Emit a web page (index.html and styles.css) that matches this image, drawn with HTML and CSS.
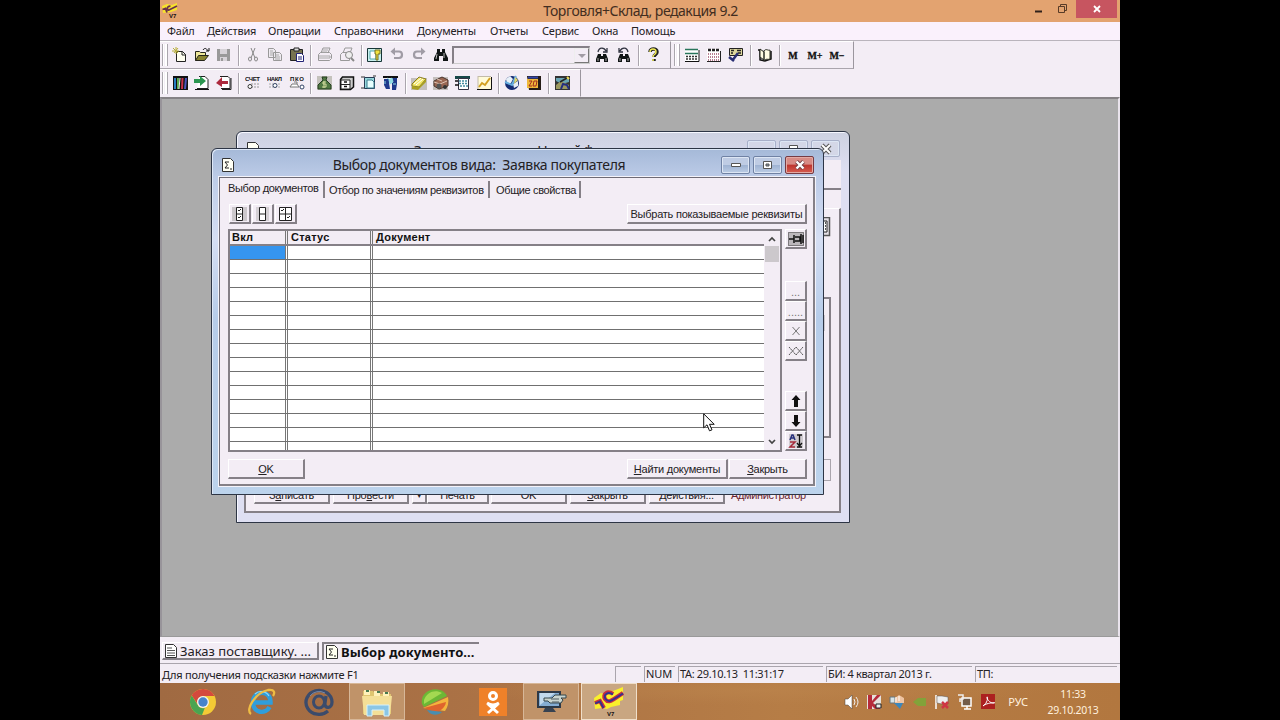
FILE: index.html
```
<!DOCTYPE html>
<html lang="ru">
<head>
<meta charset="utf-8">
<title>Торговля+Склад, редакция 9.2</title>
<link rel="stylesheet" href="styles.css">
</head>
<body>
<div class="desktop">
  <header class="titlebar">
    <svg class="app-logo" width="18" height="18" viewBox="0 0 18 18"><path d="M1 5L6 3 11 4 16 2 16 9 10 11 2 12Z" fill="#f8e32c"/><path d="M1.500 8.500l3-1 1.500 4M9.500 5.500c-3-1.500-4.500 4-1.500 3.500l8-4" fill="none" stroke="#69304c" stroke-width="1.800"/><text x="8" y="17" class="v7">V7</text></svg>
    <h1 class="app-title">Торговля+Склад, редакция 9.2</h1>
    <svg class="win-ctl" width="84" height="22" viewBox="0 0 84 22"><path d="M2 11.500h7" stroke="#30211a" stroke-width="2"/><path d="M25.500 6.500h6v6h-6zM27.500 6V4.500h6v6H32" fill="none" stroke="#583b27"/><rect x="43" width="42" height="18" fill="#c75560"/><path d="M61 6l6 6M67 6l-6 6" stroke="#fff" stroke-width="1.800"/></svg>
  </header>
  <nav class="menu"><span class="m1">Файл</span><span class="m2">Действия</span><span class="m3">Операции</span><span class="m4">Справочники</span><span class="m5">Документы</span><span class="m6">Отчеты</span><span class="m7">Сервис</span><span class="m8">Окна</span><span class="m9">Помощь</span></nav>
  <div class="toolbars">
    <div class="toolbar-row">
      <div class="toolbar tb-main">
        <i class="grip"></i>
        <svg class="ic" viewBox="0 0 16 16"><path d="M4.500 4.500h6l3 3v7h-9z" fill="#fffff0" stroke="#222"/><path d="M10 4v4h4" fill="none" stroke="#222"/><path d="M1 1l5 5M6 1L2 6M0 4h7M4 0v7" stroke="#b8ae38"/></svg>
        <svg class="ic" viewBox="0 0 16 16"><path d="M1.500 13.500v-9h4l1 1h5v3" fill="#eee79a" stroke="#25251a"/><path d="M1.500 13.500l3-5h10l-4 5z" fill="#8a8430" stroke="#25251a"/><path d="M9 3c2-3 4-1 5 1M15 1v3h-3" fill="none" stroke="#111"/></svg>
        <svg class="ic" viewBox="0 0 16 16"><path d="M1 2h13v12H1z" fill="#999"/><path d="M4 2h7v5H4zM4 10h7v4H4z" fill="#d7d3d8"/><path d="M5 11h2v3H5z" fill="#999"/></svg>
        <i class="sep s7"></i>
        <svg class="ic" viewBox="0 0 16 16"><path d="M6 1l4 10M10 1L6 11" stroke="#888" fill="none"/><ellipse cx="5" cy="12" rx="1.500" ry="2" fill="none" stroke="#888"/><ellipse cx="11" cy="12" rx="1.500" ry="2" fill="none" stroke="#888"/></svg>
        <svg class="ic" viewBox="0 0 16 16"><path d="M1.500 1.500h5l2 2v7h-7zM6.500 5.500h6l2 2v6h-8z" fill="#eeeaf0" stroke="#999"/><path d="M3 4h3M3 6h3M3 8h3M8 8h4M8 10h5M8 12h5" stroke="#aaa"/></svg>
        <svg class="ic" viewBox="0 0 16 16"><path d="M1.500 2.500h12v11h-12z" fill="#777350" stroke="#222"/><path d="M5 1h5v3H5z" fill="#ddd" stroke="#222"/><path d="M7.500 6.500h5l2 2v6h-7z" fill="#fff" stroke="#227"/><path d="M9 10h4M9 12h4" stroke="#227"/></svg>
        <i class="sep s6"></i>
        <svg class="ic" viewBox="0 0 16 16"><path d="M4 6l2-5h7l-2 5M1.500 7.500l2-2h9l2 2v4l-2 2h-11z" fill="none" stroke="#999"/><path d="M6 3h5M5 5h5M2 9h11v2H2" stroke="#aaa" fill="none"/></svg>
        <svg class="ic" viewBox="0 0 16 16"><path d="M4 6l2-5h7l-2 5M1.500 7.500l2-2h7v8h-9z" fill="none" stroke="#999"/><circle cx="10" cy="8" r="3.500" fill="#eee" stroke="#888"/><path d="M12 11l3 3" stroke="#888" stroke-width="2"/></svg>
        <i class="sep s6"></i>
        <svg class="ic" viewBox="0 0 16 16"><path d="M.500 1.500h14v13H.500z" fill="#c9f0ee" stroke="#173536"/><path d="M3 4h6v8H3z" fill="#fff" stroke="#52a9ad"/><path d="M8 3h5v4h-2v6H9V7H8z" fill="#f2e23d" stroke="#776e24"/></svg>
        <svg class="ic" viewBox="0 0 16 16"><path d="M4 4.500h6c4 0 4 6.500 0 6.500H5" fill="none" stroke="#a09ca5" stroke-width="2.200"/><path d="M6 .500v8L1.500 4.500z" fill="#a09ca5"/></svg>
        <svg class="ic" viewBox="0 0 16 16"><path d="M12 4.500H6c-4 0-4 6.500 0 6.500h5" fill="none" stroke="#a09ca5" stroke-width="2.200"/><path d="M10 .500v8l4.500-4z" fill="#a09ca5"/></svg>
        <svg class="ic" viewBox="0 0 16 16"><path d="M4 2h3v3h2V2h3v3l3 6v3h-5V9H6v5H1v-3l3-6z" fill="#101515"/><path d="M4 7l-1 5M11 6v5" stroke="#bbb"/></svg>
        <div class="combo"><span class="drop"></span></div>
        <svg class="ic" viewBox="0 0 16 16"><path d="M4 7h3v2h2V7h3l2 5v3h-4v-3H6v3H2v-3z" fill="#101515"/><path d="M4 11v3M12 11v3" stroke="#aaa"/><path d="M4 5c1-5 6-5 8-1M13 1v4H9" fill="none" stroke="#303340" stroke-width="1.300"/></svg>
        <svg class="ic" viewBox="0 0 16 16"><path d="M4 7h3v2h2V7h3l2 5v3h-4v-3H6v3H2v-3z" fill="#101515"/><path d="M4 11v3M12 11v3" stroke="#aaa"/><path d="M12 5c-1-5-6-5-8-1M3 1v4h4" fill="none" stroke="#303340" stroke-width="1.300"/></svg>
        <i class="sep s8"></i>
        <svg class="ic help" viewBox="0 0 16 16"><path d="M5 5c0-4 7-4 7 0 0 3-3 2-3 5M9 12v2" fill="none" stroke="#222" stroke-width="3.500"/><path d="M5 5c0-4 6-4 6 0 0 3-3 2-3 5M8 12v2" fill="none" stroke="#f1eb54" stroke-width="1.500"/></svg>
      </div>
      <div class="toolbar tb-calc">
        <i class="grip"></i>
        <svg class="ic" viewBox="0 0 16 16"><path d="M1 3h14v11H1z" fill="#fff"/><path d="M1 2.500h13M1 6.500h13" stroke="#28765b" stroke-width="1.500"/><path d="M2 9.500h12M2 12h12" stroke="#333" stroke-dasharray="2 1" stroke-width="1.500"/><path d="M1 14.500h14V3" fill="none" stroke="#111"/></svg>
        <svg class="ic" viewBox="0 0 16 16"><path d="M1 2h13v12H1z" fill="#fff"/><path d="M2 3h12" stroke="#222" stroke-width="2.500" stroke-dasharray="3 1"/><path d="M2 7h11M2 10h11M2 13h11" stroke="#a0546d" stroke-width="1.500" stroke-dasharray="1 1"/><path d="M1 14.500h13.500V4" fill="none" stroke="#222"/></svg>
        <svg class="ic" viewBox="0 0 16 16"><path d="M1.500 1.500h13v7h-13z" fill="#ddd79c" stroke="#222"/><path d="M3 3.500h3M9 3.500h4M3 6h2M10 6h3" stroke="#222" stroke-width="1.500"/><path d="M10 6l-6 8M1 10l5 4" stroke="#282e73" stroke-width="2.500"/></svg>
        <i class="sep s7"></i>
        <svg class="ic" viewBox="0 0 16 16"><path d="M1 3h2v10l5 1 6-2V4" fill="#aaa" stroke="#111" stroke-width="1.500"/><path d="M3 2l4 3v8l-4-3zM7 4c2-3 4 0 6-1v9c-2 1-4-1-6 2z" fill="#fffde3" stroke="#292c23"/></svg>
        <i class="sep s6"></i>
        <b class="mem">M</b><b class="mem">M+</b><b class="mem">M−</b>
      </div>
    </div>
    <div class="toolbar-row">
      <div class="toolbar tb-docs">
        <i class="grip"></i>
        <svg class="ic wide" viewBox="0 0 16 16"><path d="M0 1h15v14H0z" fill="#111"/><path d="M2 3v11" stroke="#277bc1" stroke-width="2"/><path d="M5 3v11" stroke="#5dab50" stroke-width="2"/><path d="M7 3l-1 11" stroke="#eee"/><path d="M9.500 3L9 14" stroke="#c83049" stroke-width="2"/><path d="M13 3l-1 11" stroke="#4b54bd" stroke-width="2"/></svg>
        <svg class="ic" viewBox="0 0 16 16"><path d="M5 1.500h6l3 3v9H3" fill="#fff" stroke="#222"/><path d="M0 4h6V1l6 5-6 5V8H0z" fill="#2b9650"/><path d="M1 14.500h14" stroke="#111"/></svg>
        <svg class="ic" viewBox="0 0 16 16"><path d="M4 1.500h8l2 2v10H5" fill="#fff" stroke="#222"/><path d="M12 6H6V2L0 8l6 4V9h6z" fill="#ac293d"/><path d="M6 14.500h9V3" fill="none" stroke="#222"/></svg>
        <i class="sep s7"></i>
        <svg class="ic" viewBox="0 0 16 16"><text x="0" y="6" textLength="15" class="tiny">СЧЕТ</text><path d="M6 9h9M6 12h9" stroke="#999" stroke-dasharray="2 1"/><circle cx="5" cy="11.500" r="2" fill="#fff" stroke="#333"/></svg>
        <svg class="ic" viewBox="0 0 16 16"><text x="0" y="6" textLength="15" class="tiny">НАКЛ</text><path d="M2 9h12M2 12h12" stroke="#aaa" stroke-dasharray="2 1"/><circle cx="8" cy="10.500" r="2" fill="#fff" stroke="#346"/></svg>
        <svg class="ic" viewBox="0 0 16 16"><text x="1" y="6" textLength="14" class="tiny">ПКО</text><path d="M1 12l2-3h5l2 3zM5 7h3v2" fill="#fff" stroke="#777"/><circle cx="13" cy="12" r="2" fill="#fff" stroke="#346"/></svg>
        <i class="sep s6"></i>
        <svg class="ic" viewBox="0 0 16 16"><path d="M0 1h15v14H0z" fill="#c4c2bc"/><path d="M5 2h5l-1 3 5 5v4H1v-4l5-5z" fill="#507842" stroke="#263e21"/><path d="M9 7H6v2h3v3H5M7 6v7" fill="none" stroke="#d2db9d"/></svg>
        <svg class="ic" viewBox="0 0 16 16"><path d="M1.500 4.500l2-2.500h11v10l-3 2.500h-10z" fill="#ccc" stroke="#111" stroke-width="1.500"/><path d="M2 5h9v9H2zM2 9.500h9" fill="#fff" stroke="#222"/><path d="M5 7h3M5 11.500h3" stroke="#111" stroke-width="1.500"/></svg>
        <svg class="ic" viewBox="0 0 16 16"><path d="M0 2h4M0 13h4M12 1h3" stroke="#333"/><path d="M3.500 2.500h10v11h-10z" fill="#97d7dc" stroke="#263b54"/><path d="M6 5h5l2 2v6H6z" fill="#e7ffff" stroke="#397b8f"/></svg>
        <svg class="ic" viewBox="0 0 16 16"><path d="M0 1h15v2H0z" fill="#111"/><path d="M1 4h5v4l1 6H3L1 10zM9 3h5v6l-1 6H9z" fill="#1f398c"/><path d="M6 5l3-2 1 4-3 2zM4 3l3 2M10 9h3M2 6v3" fill="#91dce4" stroke="#91dce4"/></svg>
        <i class="sep s6"></i>
        <svg class="ic" viewBox="0 0 16 16"><path d="M0 3h16v12H0z" fill="#c4bfbd"/><path d="M1 9l7-7 7 2-7 8-7-1z" fill="#f2e565" stroke="#867b26"/><path d="M3 9l7-6M5 10l7-6" stroke="#fff"/><path d="M1 11v3l6 1 8-8V4l-7 8z" fill="#aaa021"/></svg>
        <svg class="ic" viewBox="0 0 16 16"><path d="M0 2h15v13H0z" fill="#c4bfbd"/><path d="M1 6l8-4 6 3v6l-9 3-5-3z" fill="#9a6753" stroke="#49352f"/><path d="M1 7l6 2 7-3M4 4l5 2" fill="none" stroke="#ddc2b2"/><circle cx="6" cy="11" r="2.500" fill="#555"/><circle cx="12" cy="12" r="2" fill="#333"/></svg>
        <svg class="ic" viewBox="0 0 16 16"><path d="M0 1h15v3H0z" fill="#174849"/><path d="M3.500 3.500h10v11h-10z" fill="#fff" stroke="#334"/><path d="M4 6h9M4 8.500h9M5 11h8" stroke="#438ca1" stroke-dasharray="2 1" stroke-width="1.500"/><path d="M0 10h4M0 6h3" stroke="#111" stroke-width="1.500"/></svg>
        <svg class="ic" viewBox="0 0 16 16"><path d="M1 1h13v13H1z" fill="#fffbd7"/><path d="M1 1.500h13M1 1v13" stroke="#c2bba8"/><path d="M2 12l3-4 3 2 5-7" fill="none" stroke="#d2a022" stroke-width="2"/><path d="M0 14.500h14.500V2" fill="none" stroke="#111"/></svg>
        <i class="sep s5"></i>
        <svg class="ic" viewBox="0 0 16 16"><circle cx="8" cy="8" r="7" fill="#142b72"/><path d="M2 4l4-3 3 3-2 4-4 1zM9 9l5-3v5l-4 2z" fill="#e8f1f8"/><path d="M1 7l7 3 4-9" fill="none" stroke="#67afe0" stroke-width="2"/><path d="M11 2l3 3-4 4" fill="#e1d66b"/></svg>
        <svg class="ic" viewBox="0 0 16 16"><path d="M1 1h14v14H3z" fill="#251c16"/><path d="M1 4h11v9H1z" fill="#efb83a"/><path d="M3 6h3l-3 5h3M8 6h3l-1 5H7z" fill="none" stroke="#a22d1e"/><path d="M2 2.500h10" stroke="#3346a6" stroke-width="2"/></svg>
        <i class="sep s7"></i>
        <svg class="ic" viewBox="0 0 16 16"><path d="M0 1h15v14H0z" fill="#343333"/><path d="M1 3h13v4L7 9 1 6z" fill="#68a4b3"/><path d="M1 10l5-4 8 4v4H1z" fill="#9b985f"/><path d="M6 14l2-5 4 1 2 4" fill="none" stroke="#232d80" stroke-width="2"/><path d="M5 7l7-4" stroke="#222" stroke-width="1.500"/><path d="M12 2l2 2" stroke="#efdc55" stroke-width="2"/></svg>
      </div>
    </div>
  </div>

  <main class="mdi">
    <section class="window back">
      <div class="caption">
        <svg class="sigma" width="12" height="14" viewBox="0 0 12 14"><path d="M.500.500h8l3 3v10H.500z" fill="#fffff5" stroke="#333"/></svg>
        <span class="back-title">Заказ поставщику. Новый *</span>
        <div class="ctls"><i></i><i><svg width="11" height="9"><path d="M1.500 1.500h8v6h-8z" fill="#fff" stroke="#555"/></svg></i><i><svg width="12" height="12"><path d="M2 2l8 8M10 2l-8 8" stroke="#555" stroke-width="4"/><path d="M2 2l8 8M10 2l-8 8" stroke="#fff" stroke-width="2"/></svg></i></div>
      </div>
      <div class="back-client">
        <div class="back-head"></div>
        <div class="back-page">
          <div class="back-fields"><svg width="16" height="20" viewBox="0 0 16 20"><path d="M0 .500h14.500v18H0" fill="#e4dfe6" stroke="#555" stroke-width="1.500"/><path d="M3 4h9v11H3z" fill="#fff" stroke="#222"/><path d="M4 6h7M4 9h7M4 12h7" stroke="#222" stroke-width="1.500" stroke-dasharray="2 1"/></svg>
            <div class="back-list"><i></i></div><div class="back-note"></div></div>
          <div class="back-buttons"><span class="btn b1">З<u>а</u>писать</span><span class="btn b2">Про<u>в</u>ести</span><span class="btn b3">▼</span><span class="btn b4">Печать</span><span class="btn b5">OK</span><span class="btn b6"><u>З</u>акрыть</span><span class="btn b7"><u>Д</u>ействия...</span><span class="admin">Администратор</span></div>
        </div>
      </div>
    </section>

    <section class="window front">
      <div class="caption">
        <svg class="sigma" width="12" height="14" viewBox="0 0 12 14"><path d="M.500.500h8l3 3v10H.500z" fill="#fffff5" stroke="#333"/><path d="M7 4H3l2.500 3L3 10h4M8 11h2" fill="none" stroke="#222"/></svg>
        <h2 class="front-title">Выбор документов вида:&nbsp; Заявка покупателя</h2>
        <div class="ctls"><i><svg width="12" height="6"><path d="M1.500 1.500h9v3h-9z" fill="#fff" stroke="#555"/></svg></i><i><svg width="11" height="9"><path d="M1.500.500h8v7h-8z" fill="#fff" stroke="#555"/><path d="M4 3h3v2H4z" fill="#89a" stroke="#555"/></svg></i><i class="close"><svg width="12" height="10"><path d="M2.500 1.500l7 7M9.500 1.500l-7 7" stroke="#704045" stroke-width="4"/><path d="M2.500 1.500l7 7M9.500 1.500l-7 7" stroke="#fff" stroke-width="2.400"/></svg></i></div>
      </div>
      <div class="client">
        <div class="tabs"><span class="tab t1">Выбор документов</span><span class="tab t2">Отбор по значениям реквизитов</span><span class="tab t3">Общие свойства</span></div>
        <div class="page">
          <div class="page-tools">
            <span class="btn sq"><svg width="16" height="16"><path d="M0 1h15v14H0z" fill="#ccc8cc"/><path d="M4.500 1.500h6v13h-6zM4 8h7" fill="#fff" stroke="#222"/><path d="M6 4l1 1 2-2M6 11l1 1 2-2" fill="none" stroke="#222"/></svg></span>
            <span class="btn sq"><svg width="16" height="16"><path d="M1 1h13v14H1z" fill="#d5d1d5"/><path d="M4.500 1.500h6v13h-6zM4 8h7" fill="#fff" stroke="#222"/></svg></span>
            <span class="btn sq"><svg width="16" height="16"><path d="M1.500 1.500h12v13h-12zM7.500 1v14M1 8h13" fill="#fff" stroke="#222"/><path d="M3 4l1 1 2-2M9 11l1 1 2-2" fill="none" stroke="#222"/></svg></span>
            <span class="btn choose">Выбрать показываемые реквизиты</span>
          </div>
          <div class="page-body">
            <div class="grid">
              <div class="cells">
                <div class="row head"><b>Вкл</b><b>Статус</b><b>Документ</b></div>
                <div class="row"><i class="sel"></i><i></i><i></i></div>
                <div class="row"><i></i><i></i><i></i></div>
                <div class="row"><i></i><i></i><i></i></div>
                <div class="row"><i></i><i></i><i></i></div>
                <div class="row"><i></i><i></i><i></i></div>
                <div class="row"><i></i><i></i><i></i></div>
                <div class="row"><i></i><i></i><i></i></div>
                <div class="row"><i></i><i></i><i></i></div>
                <div class="row"><i></i><i></i><i></i></div>
                <div class="row"><i></i><i></i><i></i></div>
                <div class="row"><i></i><i></i><i></i></div>
                <div class="row"><i></i><i></i><i></i></div>
                <div class="row"><i></i><i></i><i></i></div>
                <div class="row"><i></i><i></i><i></i></div>
                <div class="row last"><i></i><i></i><i></i></div>
              </div>
              <div class="scroll"><svg width="8" height="6"><path d="M1 5l3-3 3 3" fill="none" stroke="#444" stroke-width="1.700"/></svg><i class="thumb"></i><svg width="8" height="6"><path d="M1 1l3 3 3-3" fill="none" stroke="#444" stroke-width="1.700"/></svg></div>
            </div>
            <div class="side">
              <span class="btn pin"><svg width="18" height="16"><path d="M1.500 1.500h15v13h-15z" fill="#bbb7bb" stroke="#222" stroke-dasharray="1 1"/><path d="M2 8h5M7 4v8M8 6h5v4H8M14 3v10M16 4v8" fill="none" stroke="#111" stroke-width="1.500"/></svg></span>
              <span class="btn dots">...</span>
              <span class="btn dots">.....</span>
              <span class="btn"><svg width="16" height="12"><path d="M4.500 2l7 8M11.500 2l-7 8" stroke="#777"/></svg></span>
              <span class="btn"><svg width="16" height="12"><path d="M1 2l7 8 7-8M1 10l7-8 7 8" fill="none" stroke="#555" stroke-dasharray="2 .5"/></svg></span>
              <span class="btn up"><svg width="12" height="14"><path d="M6 1l4.500 5H8v7H4V6H1.500z" fill="#111"/></svg></span>
              <span class="btn"><svg width="12" height="14"><path d="M6 13l4.500-5H8V1H4v7H1.500z" fill="#111"/></svg></span>
              <span class="btn"><svg width="18" height="16"><path d="M2 1h14v14H2z" fill="#d0ccd0"/><path d="M3 7l2-5h1l2 5M4 5h3" fill="none" stroke="#28317c" stroke-width="1.500"/><path d="M3 9h5l-5 5h5" fill="none" stroke="#a52b3b" stroke-width="1.500"/><path d="M10 2h5M12.500 2v11M10 10l2.500 3 2.500-3M10 14h5" fill="none" stroke="#111" stroke-width="1.300"/></svg></span>
            </div>
          </div>
          <div class="actions"><span class="btn ok"><u>O</u>K</span><span class="btn find"><u>Н</u>айти документы</span><span class="btn shut"><u>З</u>акрыть</span></div>
        </div>
      </div>
    </section>
    <svg class="pointer" width="12" height="19" viewBox="0 0 12 19"><path d="M.700.800v14l3.300-3 2.500 6 2.500-1-2.500-5.500h4.700z" fill="#fff" stroke="#111"/></svg>
  </main>

  <div class="wintabs">
    <span class="wintab"><svg width="12" height="14"><path d="M.500.500h8l3 3v10H.500z" fill="#fff" stroke="#333"/><path d="M2 4h5M2 6.500h8M2 9h8M2 11.500h8" stroke="#555"/></svg><span class="wt1">Заказ поставщику. ...</span></span>
    <span class="wintab on"><svg width="12" height="14"><path d="M.500.500h8l3 3v10H.500z" fill="#fffff0" stroke="#333"/><path d="M7 4H3l2.500 3L3 10h4M8 11h2" fill="none" stroke="#222"/></svg><span class="wt2">Выбор документо...</span></span>
  </div>
  <div class="status"><span class="st0">Для получения подсказки нажмите F1</span><span class="box bx1"></span><span class="box bx2">NUM</span><span class="box bx3">TA: 29.10.13&nbsp; 11:31:17</span><span class="box bx4">БИ: 4 квартал 2013 г.</span><span class="box bx5">ТП:</span></div>

  <footer class="taskbar">
    <div class="apps">
      <span class="app"><svg width="28" height="28" viewBox="0 0 28 28"><circle cx="14" cy="14" r="13" fill="#f4ca35"/><path d="M2.700 7.500A13 13 0 0 1 25.500 8H14a6 6 0 0 0-5.500 8z" fill="#d4493d"/><path d="M2.700 7.500L8.800 17a6 6 0 0 0 7 3L13 27A13 13 0 0 1 2.700 7.500z" fill="#4aa451"/><circle cx="14" cy="14" r="6" fill="#f5f2ee"/><circle cx="14" cy="14" r="4.700" fill="#4783c9"/></svg></span>
      <span class="app"><svg width="30" height="28" viewBox="0 0 30 28"><path d="M7 14.500h17.500C25 1 7 2 7 14.500c0 11 13 12 16.500 4.500" fill="none" stroke="#2f9edb" stroke-width="4.500"/><path d="M9 6c4-4 11-3 14 2" fill="none" stroke="#8fd8f7" stroke-width="1.200"/><path d="M5 26C-1 22 9 5 22 2c7-1 7 3 5 6" fill="none" stroke="#efbd43" stroke-width="2.300"/></svg></span>
      <span class="app"><svg width="30" height="28" viewBox="0 0 30 28"><path d="M24 23a13 12 0 1 1 4-9c0 7-8 7-7 1l1-7" fill="none" stroke="#3b4b6b" stroke-width="3.300"/><ellipse cx="15" cy="14" rx="5.500" ry="6" fill="none" stroke="#3b4b6b" stroke-width="3"/><path d="M6 8a11 10 0 0 1 15-3" fill="none" stroke="#7288ac"/></svg></span>
      <span class="app open"><svg width="32" height="30" viewBox="0 0 32 30"><path d="M2 7V4h10l2 3h16v20H2z" fill="#dfc570"/><path d="M3 3h6v5H3zM13 4h6v5h-6zM22 5h6v5h-6z" fill="#fff1ba"/><path d="M5 4h3M16 5h3M24 6h3" stroke="#477a50" stroke-width="2"/><path d="M1 9h30l-2 19H3z" fill="#f4df97"/><path d="M6 29V18h22v11h-5v-6H11v6z" fill="#8bc6e5" stroke="#d7f1fb"/></svg></span>
      <span class="app"><svg width="30" height="28" viewBox="0 0 30 28"><path d="M2 16C0 6 10-1 20 2c4 1 6 4 7 6L4 19z" fill="#6cb835"/><path d="M4 12c3-8 11-11 18-7L4 16z" fill="#a4d951"/><path d="M3 20l25-11c1 5 0 10-3 14z" fill="#f3b43d"/><path d="M4 20l22-6c-1 6-6 10-12 10z" fill="#df642d"/><path d="M7 22l15 2c-4 4-11 4-15-2" fill="#488eb0"/></svg></span>
      <span class="app"><svg width="28" height="28" viewBox="0 0 28 28"><path d="M0 0h28v28H0z" fill="#ef8129"/><circle cx="14" cy="8" r="3.500" fill="none" stroke="#fff" stroke-width="3"/><path d="M8 15q6 4 12 0M9 25l10-9M19 25L9 16" fill="none" stroke="#fff" stroke-width="3"/></svg></span>
      <span class="app open"><svg width="32" height="26" viewBox="0 0 32 26"><path d="M2 2h24v17H2z" fill="#2d3947"/><path d="M4 4h20v13H4z" fill="#85add3"/><path d="M5 16L20 4H5z" fill="#c1d9ed"/><path d="M10 19h8l3 4H8z" fill="#374251"/><path d="M9 9h8l3-3h11v3h-5l2 2-2 3H15l-2-2H9z" fill="#c9d4cf" stroke="#35464d"/><path d="M16 10h8M17 13h7" stroke="#4d5b61"/></svg></span>
      <span class="app open active"><svg width="34" height="30" viewBox="0 0 34 30"><path d="M2 11l7-5 3 1 5-4 4 1 10-4v13l-3 1v4l-9 2-4 2-5-1-7 1z" fill="#f9ef2c"/><g fill="none"><path d="M3 16l5-2 4 7M21 7c-5-4-11 0-8 5 3 4 6 2 9 0l9-6" stroke="#c72d42" stroke-width="4"/><path d="M3 16.500l5-2 3.500 6.500M21 7.500c-5-3.500-10 0-7.500 4.500 3 3.500 5.500 2 8.500 0l9-5.500" stroke="#30338f" stroke-width="1.800"/></g><text x="15" y="29" class="v7">V7</text></svg></span>
    </div>
    <div class="tray">
      <svg viewBox="0 0 16 16"><path d="M1 5h3l4-4v14l-4-4H1z" fill="#fff" stroke="#444" stroke-width=".5"/><path d="M10 5q2 3 0 6M12 3q4 5 0 10" fill="none" stroke="#eee"/></svg>
      <svg viewBox="0 0 16 16"><path d="M1 1h14v14H1z" fill="#e5e1dc"/><path d="M2 1h4v6l5-6h4L7 9l8 6H9l-3-3v3H2z" fill="#b62b3a"/><path d="M10 10h5v4h-5z" fill="#eee" stroke="#222"/></svg>
      <svg viewBox="0 0 16 16"><path d="M1 3h5v6H1z" fill="#d7e5e9" stroke="#69777c"/><path d="M6 4l4-3 5 3v5H6z" fill="#efc4a2"/><path d="M5 9h9l-3 6z" fill="#3b87bc"/><path d="M7 3v5M10 2v5" stroke="#fff"/></svg>
      <svg viewBox="0 0 16 16"><path d="M1 8l5-4h8v8H6z" fill="#82a23a"/></svg>
      <svg viewBox="0 0 16 16"><path d="M2 1v14" stroke="#fff" stroke-width="1.500"/><path d="M3 2h5l6 1v7H8L3 9z" fill="#eee" stroke="#555" stroke-width=".5"/><path d="M8 8l6 6M14 8l-6 6" stroke="#cf3643" stroke-width="2.500"/></svg>
      <svg viewBox="0 0 16 16"><path d="M5 4h9v8H5zM10 12v3M7 15h7" fill="#735c49" stroke="#fff" stroke-width="1.500"/><path d="M1 1h5v4H3v3" fill="none" stroke="#eee" stroke-width="1.500"/></svg>
      <svg viewBox="0 0 16 16"><path d="M1 0h14v15H1z" fill="#ac201f"/><path d="M3 12C8 9 8 2 7 3s3 7 7 6S5 9 3 12z" fill="none" stroke="#fff"/></svg>
      <span class="lang">РУС</span>
      <div class="clock"><span>11:33</span><span>29.10.2013</span></div>
    </div>
  </footer>
</div>
</body>
</html>
```
FILE: styles.css
```
* { box-sizing: border-box; }
body { margin: 0; background: #000; font-family: "Noto Sans", "Open Sans", sans-serif; color: #242124; }
.desktop { width: 960px; height: 720px; margin: 0 auto; display: flex; flex-direction: column; background: #f3edf5; overflow: hidden; }
svg { display: block; flex: none; }
h1, h2 { margin: 0; font-weight: 400; }
i { font-style: normal; }
.v7 { font: bold 6px "Liberation Sans", sans-serif; fill: #111; }

.titlebar { height: 22px; flex: none; display: flex; align-items: flex-start; justify-content: space-between; background: #e3a370; padding-left: 1px; }
.app-logo { margin-top: 1px; }
.app-title { width: 800px; padding-left: 69px; text-align: center; font-size: 14px; line-height: 22px; letter-spacing: -.47px; color: #422d20; white-space: nowrap; }
.win-ctl { margin-right: 3px; }
.menu { height: 19px; flex: none; background: #faf1fc; border-bottom: 1px solid #b9b4bc; display: grid; grid-template-columns: 40px 61px 66px 83px 73px 52px 50px 39px auto; padding-left: 7px; font-size: 11px; letter-spacing: -.2px; line-height: 18px; white-space: nowrap; }

.toolbars { height: 56px; flex: none; }
.toolbar-row { height: 28px; display: flex; }
.toolbar { height: 28px; display: flex; align-items: center; border-right: 1px solid #9b969e; border-bottom: 1px solid #aaa5ad; border-top: 1px solid #fff; }
.tb-main { width: 511px; }
.tb-calc { width: 183px; }
.tb-docs { width: 421px; border-bottom-color: transparent; }
.grip { width: 6px; height: 22px; margin: 0 1px 0 2px; border: solid #aaa6ad; border-width: 0 1px; box-shadow: inset 1px 0 #fff, inset -2px 0 #fff; }
.tb-calc .grip { margin-left: 3px; margin-right: 1px; }
.ic { width: 16px; height: 16px; margin: 0 3px; }
.wide { margin: 0 2px 0 4px; }
.help { margin-left: 2px; }
.sep { height: 21px; flex: none; background: linear-gradient(90deg, transparent calc(50% - .5px), #aaa5ad calc(50% - .5px), #aaa5ad calc(50% + .5px), #fff calc(50% + .5px), #fff calc(50% + 1.5px), transparent calc(50% + 1.5px)); }
.s5 { width: 5px; } .s6 { width: 6px; } .s7 { width: 7px; } .s8 { width: 8px; }
.combo { width: 138px; height: 18px; margin-right: 1px; border: 2px solid #858087; border-right: 1px solid #ccc; border-bottom: 1px solid #ccc; display: flex; justify-content: flex-end; }
.drop { width: 15px; border: 1px solid #eee; border-right-color: #777; border-bottom-color: #777; display: flex; justify-content: center; align-items: center; }
.drop::before { content: ""; border: 4px solid transparent; border-top-color: #a29da5; border-bottom: 0; }
.mem { width: 22px; text-align: center; font: bold 10px "Liberation Serif", serif; color: #111; -webkit-text-stroke: .3px #111; white-space: nowrap; }
.tiny { font: bold 6px "Liberation Sans", sans-serif; fill: #111; }

.mdi { height: 540px; flex: none; position: relative; background: #ababab; border-top: 2px solid #858285; border-left: 2px solid #98949a; border-right: 2px solid #e9e3ec; border-bottom: 1px solid #999; overflow: hidden; font-family: "Liberation Sans", sans-serif; font-size: 11px; letter-spacing: -.24px; }
.window { position: absolute; border: 1px solid #2d3545; border-radius: 6px 6px 0 0; display: flex; flex-direction: column; }
.back { left: 74px; top: 32px; width: 614px; height: 392px; background: linear-gradient(#cdd1e1, #dedff2 40px); box-shadow: inset 1px 1px #f6f7ff; padding: 0 8px 9px 7px; }
.front { left: 49px; top: 49px; width: 613px; height: 347px; padding: 0 8px 8px 7px; background: linear-gradient(#a5b9d8, #bdcce8 29px, #d5def3 90px, #b6cce9 170px, #bcd3ec); box-shadow: inset 1px 1px #dee8f7; }
.caption { display: flex; flex: none; height: 28px; font: 14px "Noto Sans", sans-serif; }
.sigma { margin: 9px 0 0 3px; }
.back .sigma { margin-top: 10px; }
.front-title, .back-title { flex: 1; text-align: center; font-size: 14px; line-height: 32px; white-space: nowrap; }
.front-title { padding-left: 3px; letter-spacing: -.31px; }
.back-title { line-height: 37px; letter-spacing: -.35px; }
.ctls { display: flex; gap: 3px; padding: 7px 1px 0 0; }
.ctls i { width: 29px; height: 18px; border: 1px solid #7082a4; border-radius: 2px; box-shadow: inset 0 0 0 1px #dde6f4; background: linear-gradient(#bfcce4 48%, #9eb2d2 50%, #bccde5); display: flex; align-items: center; justify-content: center; }
.ctls .close { background: linear-gradient(#d78b85 45%, #bd342e 50%, #d65d50); border-color: #763b43; box-shadow: inset 0 0 0 1px #e4aaa4; }
.back .ctls i { height: 17px; background: #d4d7e7; border-color: #a8b0c9; }
.back .ctls { padding-top: 8px; }

.btn { display: flex; align-items: center; justify-content: center; background: #f3edf5; border: 1px solid #fff; border-right: 2px solid #858087; border-bottom: 2px solid #858087; white-space: nowrap; }
u { text-underline-offset: 1px; }

.back-client { flex: 1; border: solid #858087; border-width: 0 0 2px 2px; background: #f3edf5; display: flex; flex-direction: column; }
.back-head { height: 30px; border-bottom: 2px solid #858087; }
.back-page { flex: 1; margin-top: 18px; border-top: 1px solid #fff; border-right: 2px solid #858087; display: flex; flex-direction: column; justify-content: space-between; }
.back-fields { padding: 8px 8px 0 0; display: flex; flex-direction: column; align-items: flex-end; }
.back-list { width: 30px; height: 141px; margin-top: 60px; border: 2px solid #858087; border-left: 0; padding: 16px 4px 0 0; display: flex; justify-content: flex-end; }
.back-list i { width: 16px; height: 16px; background: #ccc8cf; }
.back-note { width: 30px; height: 22px; margin-top: 21px; border: 1px solid #aaa5ad; }
.back-buttons { display: flex; height: 20px; margin: 0 0 7px 8px; }
.back-buttons .btn { padding-top: 3px; }
.b1, .b2, .b5, .b6, .b7 { width: 76px; margin-right: 3px; }
.b3 { width: 15px; font-size: 8px; }
.b4 { width: 62px; margin-right: 2px; }
.admin { margin-left: 3px; line-height: 23px; letter-spacing: -.35px; color: #6b2631; }

.client { flex: 1; background: #f3edf5; border: 1px solid #6e6a74; border-right: 2px solid #858087; border-bottom: 2px solid #858087; box-shadow: 0 0 0 1px #f4f3fa; padding: 0 6px 0 8px; }
.tabs { display: flex; height: 20px; padding-top: 3px; white-space: nowrap; letter-spacing: -.36px; }
.tab { height: 17px; line-height: 18px; border-right: 2px solid #858087; }
.t1 { width: 97px; line-height: 15px; }
.t2 { width: 165px; padding-left: 4px; }
.t3 { width: 91px; padding-left: 6px; }
.page { display: flex; flex-direction: column; }
.page-tools { display: flex; gap: 1px; height: 30px; padding: 6px 0 4px 1px; margin-bottom: 1px; }
.sq { width: 22px; }
.choose { width: 180px; margin-left: auto; }
.page-body { display: flex; justify-content: space-between; height: 223px; }
.grid { width: 554px; border: 2px solid #858087; background: #f3edf5; display: flex; overflow: hidden; }
.cells { width: 534px; background: #fff; }
.row { height: 14px; display: grid; grid-template-columns: 58px 85px 1fr; border-bottom: 1px solid #707070; }
.row > * { border-right: 3px double #777; }
.row > :last-child { border-right: 0; }
.head { height: 15px; background: #f3edf5; border-bottom: 2px solid #858087; line-height: 13px; letter-spacing: .25px; color: #111; }
.head b { padding-left: 2px; }
.head b + b { padding-left: 3px; }
.last { border: 0; }
.row .sel { background: #3595ef; background-clip: padding-box; }
.scroll { width: 16px; display: flex; flex-direction: column; align-items: center; padding: 5px 0 5px; }
.scroll svg:last-child { margin-top: auto; }
.thumb { width: 14px; height: 16px; background: #ccc8cc; margin-top: 4px; }
.side { width: 22px; display: flex; flex-direction: column; }
.side .btn { height: 20px; flex: none; }
.side .pin { margin: 0 0 32px; }
.side .up { margin-top: 30px; }
.dots { color: #777; padding-top: 3px; letter-spacing: 0; }
.actions { display: flex; height: 20px; margin-top: 7px; }
.ok { width: 77px; }
.find { width: 101px; margin: 0 1px 0 auto; }
.shut { width: 78px; }
.pointer { position: absolute; left: 541px; top: 314px; }

.wintabs { height: 27px; flex: none; display: flex; gap: 3px; padding: 5px 0 3px 2px; border-bottom: 1px solid #aaa5ad; }
.wintab { width: 157px; display: flex; align-items: center; gap: 3px; padding-left: 2px; border: 1px solid #fff; border-right: 2px solid #858087; border-bottom: 2px solid #858087; font-size: 13px; line-height: 16px; white-space: nowrap; }
.on { border: solid #858087; border-width: 2px 0 0 2px; font-weight: 700; letter-spacing: .1px; color: #111; }
.status { height: 19px; flex: none; display: flex; padding: 2px 0 1px 2px; font-size: 11px; line-height: 17px; letter-spacing: -.34px; white-space: nowrap; }
.st0 { width: 453px; letter-spacing: -.24px; }
.box { border: solid #aaa5ad; border-width: 1px 0 0 1px; padding-left: 1px; margin-right: 3px; height: 16px; line-height: 14px; }
.bx1 { width: 26px; } .bx2 { width: 31px; letter-spacing: -.1px; } .bx3 { width: 145px; } .bx4 { width: 146px; } .bx5 { flex: 1; }

.taskbar { flex: 1; display: flex; justify-content: space-between; padding: 0 13px 0 14px; background: radial-gradient(ellipse at 62% 20%, #bd864e88, transparent 35%), linear-gradient(90deg, #a06a42, #aa7145 30%, #b67d46 65%, #b2773f); }
.apps, .tray { display: flex; }
.app { width: 58px; display: flex; align-items: center; justify-content: center; }
.open { width: 56px; margin: 0 1px; background: #c09369; border: 1px solid #d7b798; }
.active { background: #c9a681; border-color: #f0dfca; }
.tray { align-items: center; gap: 6.700px; color: #fff0df; font-size: 11px; }
.tray svg { width: 16px; height: 16px; }
.lang { width: 24px; margin-left: 6px; font-size: 11px; }
.clock { width: 68px; display: flex; flex-direction: column; text-align: center; font-size: 10.500px; line-height: 16px; letter-spacing: -.25px; }
```
